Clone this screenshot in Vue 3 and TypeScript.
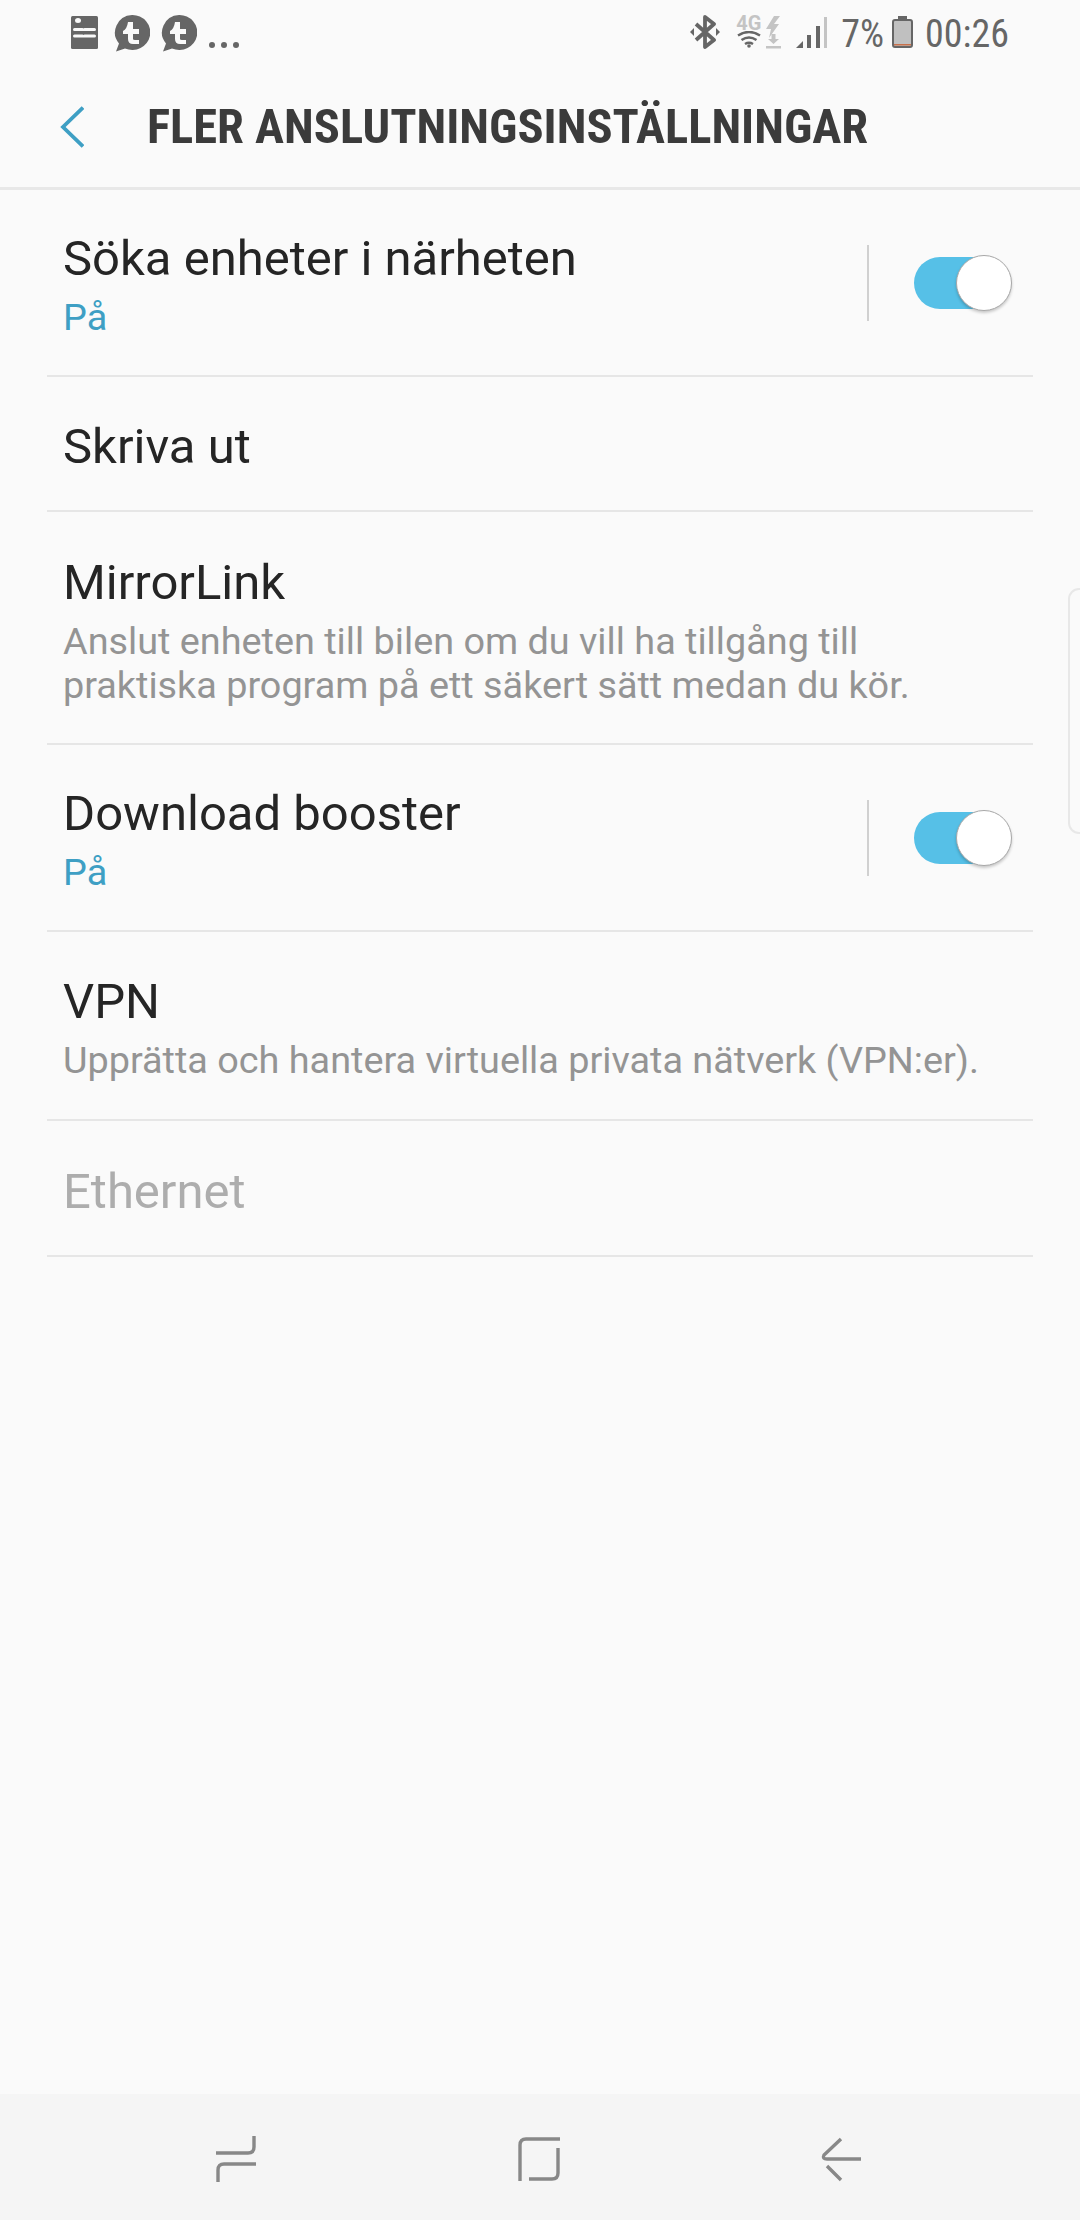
<script setup lang="ts">
interface Row {
  title: string;
  sub?: string;
  on?: boolean;
  disabled?: boolean;
  kind?: 'plain' | 'long';
  height: number;
}

const rows: Row[] = [
  { title: 'Söka enheter i närheten', sub: 'På', on: true, height: 187 },
  { title: 'Skriva ut', kind: 'plain', height: 135 },
  {
    title: 'MirrorLink',
    sub: 'Anslut enheten till bilen om du vill ha tillgång till praktiska program på ett säkert sätt medan du kör.',
    kind: 'long',
    height: 233,
  },
  { title: 'Download booster', sub: 'På', on: true, height: 187 },
  { title: 'VPN', sub: 'Upprätta och hantera virtuella privata nätverk (VPN:er).', height: 189 },
  { title: 'Ethernet', disabled: true, kind: 'plain', height: 136 },
];
</script>

<template>
  <div class="screen">
    <div class="status">
      <div class="status-left">
        <svg class="doc" width="27" height="33" viewBox="0 0 27 33">
          <rect width="27" height="33" rx="1.500" fill="#666" />
          <ellipse cx="7" cy="4.500" rx="3" ry="2.500" fill="#fafafa" />
          <path d="M3.500 13.500h8M13.500 13.500h10M3.500 20h8M13.500 20h10" stroke="#fafafa" stroke-width="3" stroke-linecap="round" />
        </svg>
        <svg v-for="n in 2" :key="n" class="bubble" width="37" height="37" viewBox="0 0 37 37">
          <path d="M19 0a18 17.500 0 1 1-7 33.500l-9 3 3-8A18 17.500 0 0 1 19 0z" fill="#666" />
          <path d="M15 7h5v7h6v5h-6v5q0 1 2 1h4v4h-6q-5 0-5-5v-5h-5v-3q4-2 5-9z" fill="#fafafa" />
        </svg>
        <div class="more"><i></i><i></i><i></i></div>
      </div>
      <div class="status-right">
        <svg class="bt" width="30" height="34" viewBox="0 0 30 34">
          <path d="M6 9l18 16-9 7V2l9 7L6 25" fill="none" stroke="#666" stroke-width="3.800" stroke-linejoin="round" />
          <path d="M0 17l4-4v8zM30 17l-4-4v8z" fill="#666" />
        </svg>
        <div class="net">
          <span class="net-label">4G</span>
          <svg width="26" height="17" viewBox="0 0 26 17">
            <path d="M2 4.500q11-7 22 0M5.500 9q7.500-5 15 0M9 13q4-2.500 8 0" fill="none" stroke="#666" stroke-width="2.500" />
            <circle cx="13" cy="15" r="1.800" fill="#666" />
          </svg>
        </div>
        <svg class="charge" width="15" height="33" viewBox="0 0 15 33">
          <path d="M8 0L0 13h5L3 22 13 8H8l6-8z" fill="#c4c4c4" />
          <path d="M5.500 18h4v5h3.500l-5.500 5-5.500-5h3.500zM0 30h15v2.500H0z" fill="#c4c4c4" />
        </svg>
        <svg class="signal" width="31" height="31" viewBox="0 0 31 31">
          <path d="M0 31l7-7v7z" fill="#666" />
          <rect x="11" y="18" width="4" height="13" fill="#666" />
          <rect x="20" y="9" width="4" height="22" fill="#666" />
          <rect x="28" width="3" height="31" fill="#c4c4c4" />
        </svg>
        <span class="pct">7%</span>
        <svg class="battery" width="21" height="32" viewBox="0 0 21 32">
          <rect x="6" width="9" height="4" fill="#666" />
          <rect x="1" y="4" width="19" height="27" rx="2" fill="#c0c0c0" stroke="#666" stroke-width="2" />
          <rect x="2" y="28" width="17" height="1.500" fill="#c8704a" />
        </svg>
        <span class="time">00:26</span>
      </div>
    </div>

    <header class="appbar">
      <svg class="back" width="24" height="44" viewBox="0 0 24 44">
        <path d="M23 2.500L3 22l20 19.500" fill="none" stroke="#3e9fc4" stroke-width="3.800" />
      </svg>
      <h1 class="title">FLER ANSLUTNINGSINSTÄLLNINGAR</h1>
    </header>

    <main class="list">
      <div
        v-for="row in rows"
        :key="row.title"
        class="row"
        :class="row.kind"
        :style="{ height: row.height + 'px' }"
      >
        <div class="row-text">
          <div class="row-title" :class="{ disabled: row.disabled }">{{ row.title }}</div>
          <div v-if="row.sub" class="row-sub" :class="{ active: row.on }">{{ row.sub }}</div>
        </div>
        <div v-if="row.on" class="row-switch">
          <span class="vline"></span>
          <span class="track"><span class="knob"></span></span>
        </div>
      </div>
    </main>

    <div class="edge"></div>

    <nav class="navbar">
      <svg width="40" height="46" viewBox="0 0 40 46">
        <path d="M0 17h32q6 0 6-6V0M40 28H8q-6 0-6 6v12" fill="none" stroke="#888" stroke-width="3.400" />
      </svg>
      <svg width="42" height="46" viewBox="0 0 42 46">
        <path d="M2 45V9q0-6 6-6h34M40 12v25q0 6-6 6H11" fill="none" stroke="#888" stroke-width="3.400" />
      </svg>
      <svg width="40" height="46" viewBox="0 0 40 46">
        <path d="M20 3L3 19q-2 4 3 4h34M6 30l14 14" fill="none" stroke="#888" stroke-width="3.400" />
      </svg>
    </nav>
  </div>
</template>

<style scoped>
.screen {
  position: relative;
  width: 1080px;
  height: 2220px;
  background: #fafafa;
  display: flex;
  flex-direction: column;
  font-family: Roboto, "Liberation Sans", sans-serif;
  overflow: hidden;
}

.status {
  height: 66px;
  display: flex;
  justify-content: space-between;
  align-items: flex-start;
  padding: 14px 71px 0 71px;
  box-sizing: border-box;
}

.status-left {
  display: flex;
  align-items: flex-start;
}

.doc {
  margin-top: 2px;
}

.bubble {
  margin-left: 15px;
  margin-top: 1px;
}

.bubble + .bubble {
  margin-left: 10px;
}

.more {
  display: flex;
  gap: 6px;
  margin: 28px 0 0 12px;
}

.more i {
  width: 6px;
  height: 6px;
  border-radius: 50%;
  background: #666;
}

.status-right {
  display: flex;
  align-items: flex-start;
  color: #666;
}

.bt {
  margin-top: 1px;
}

.net {
  width: 26px;
  margin-left: 16px;
  margin-top: 1px;
  display: flex;
  flex-direction: column;
}

.net-label {
  height: 16px;
  font-size: 20px;
  line-height: 17px;
  font-weight: 700;
  color: #c4c4c4;
}

.charge {
  margin-left: 4px;
  margin-top: 2px;
}

.signal {
  margin-left: 15px;
  margin-top: 3px;
}

.pct,
.time {
  font-size: 38px;
  line-height: 40px;
  font-stretch: 80%;
}

.pct {
  margin-left: 14px;
}

.battery {
  margin-left: 8px;
  margin-top: 2px;
}

.time {
  margin-left: 12px;
}

.appbar {
  height: 121px;
  display: flex;
  align-items: center;
  padding-left: 60px;
  border-bottom: 3px solid #e8e8e8;
}

.back {
  flex: none;
}

.title {
  margin: 0 0 0 63px;
  font-size: 48.500px;
  font-weight: 700;
  color: #3b3b3b;
  white-space: nowrap;
  font-stretch: 75%;
}

.list {
  margin: 0 47px;
}

.row {
  display: flex;
  align-items: center;
  justify-content: space-between;
  border-bottom: 2px solid #e6e6e6;
  box-sizing: border-box;
  padding-left: 16px;
}

.row.plain {
  padding-top: 5px;
}

.row.long {
  padding-top: 3px;
}

.row-text {
  flex: 1;
  min-width: 0;
  padding-top: 2px;
}

.row-title {
  font-size: 49px;
  line-height: 60px;
  color: #252525;
}

.row-title.disabled {
  color: #adadad;
}

.row-sub {
  font-size: 37.800px;
  line-height: 44px;
  margin-top: 6px;
  color: #949494;
  width: 930px;
}

.row-sub.active {
  color: #3e9fc4;
}

.row-switch {
  display: flex;
  align-items: center;
  margin-right: 23px;
}

.vline {
  width: 2px;
  height: 76px;
  background: #d0d0d0;
}

.track {
  position: relative;
  width: 96px;
  height: 52px;
  margin-left: 45px;
  border-radius: 26px;
  background: #56c0e7;
}

.knob {
  position: absolute;
  right: -2px;
  top: -2px;
  width: 56px;
  height: 56px;
  box-sizing: border-box;
  border-radius: 50%;
  background: #fff;
  border: 1.500px solid #a8a8a8;
  box-shadow: 0 2px 3px rgba(0, 0, 0, 0.2);
}

.edge {
  position: absolute;
  right: -10px;
  top: 588px;
  width: 18px;
  height: 242px;
  border: 2px solid #e8e8e8;
  border-radius: 14px;
}

.navbar {
  position: absolute;
  left: 0;
  right: 0;
  bottom: 0;
  height: 126px;
  background: #f5f5f5;
  display: flex;
  align-items: center;
  justify-content: space-between;
  padding: 4px 219px 0 216px;
  box-sizing: border-box;
}
</style>

<style>
html,
body {
  margin: 0;
  background: #fafafa;
}
</style>
